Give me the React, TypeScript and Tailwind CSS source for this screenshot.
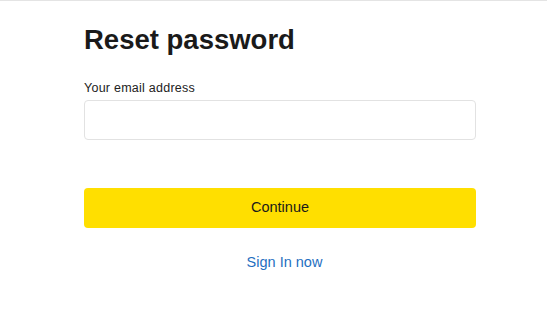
export default function App() {
  return (
    <div className="min-h-[326px] w-full bg-white border-t border-[#e4e4e4]" style={{ fontFamily: '"Liberation Sans", Arial, sans-serif' }}>
      <div className="ml-[84px] w-[392px] pt-[22px] flex flex-col">
        <h1 className="text-[27.5px] leading-[34px] font-bold text-[#1a1a1a]">Reset password</h1>
        <label className="mt-[23px] text-[12.5px] leading-[16px] tracking-[0.25px] text-[#222]">Your email address</label>
        <input
          type="email"
          className="mt-[4px] h-[40px] w-full rounded-[4px] border border-[#e2e2e2] bg-white px-3 outline-none"
        />
        <button className="mt-[48px] h-[40px] w-full rounded-[4px] bg-[#ffdf00] text-[14.5px] text-[#1a1a1a]">
          Continue
        </button>
        <a className="mt-[24px] ml-[9px] self-center text-[14.5px] leading-[20px] text-[#1f6fc1]" href="#">
          Sign In now
        </a>
      </div>
    </div>
  );
}
